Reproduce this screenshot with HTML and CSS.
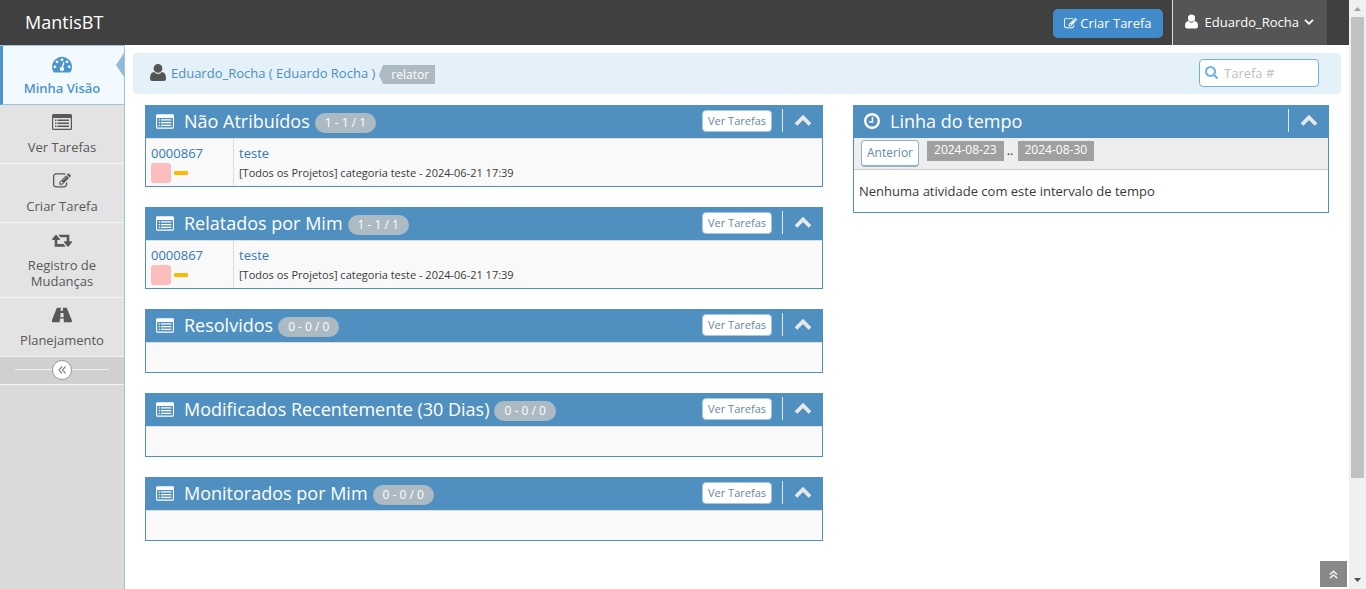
FILE: index.html
```html
<!DOCTYPE html>
<html lang="pt-BR">
<head>
<meta charset="utf-8">
<title>Minha Visão - MantisBT</title>
<link rel="stylesheet" href="styles.css">
</head>
<body>
<svg class="sprite" aria-hidden="true">
  <symbol id="i-gauge" viewBox="0 0 1792 1792"><path d="M384 1152q0-53-37.500-90.500t-90.500-37.500-90.500 37.500-37.500 90.500 37.500 90.500 90.500 37.500 90.500-37.500 37.500-90.500zm192-448q0-53-37.500-90.500t-90.500-37.500-90.500 37.500-37.500 90.500 37.500 90.500 90.500 37.500 90.500-37.500 37.500-90.500zm428 481l101-382q6-26-7.500-48.500t-38.500-29.500-48 6.500-30 39.500l-101 382q-60 5-107 43.500t-63 98.500q-20 77 20 146t117 89 146-20 89-117q16-60-6-117t-72-91zm660-33q0-53-37.500-90.500t-90.500-37.500-90.500 37.500-37.500 90.500 37.500 90.500 90.500 37.500 90.500-37.500 37.500-90.500zm-640-640q0-53-37.500-90.500t-90.500-37.500-90.500 37.500-37.500 90.500 37.500 90.500 90.500 37.500 90.500-37.500 37.500-90.500zm448 192q0-53-37.500-90.500t-90.500-37.500-90.500 37.500-37.500 90.500 37.500 90.500 90.500 37.500 90.500-37.500 37.500-90.500zm320 448q0 261-141 483-19 29-54 29h-1402q-35 0-54-29-141-221-141-483 0-182 71-348t191-286 286-191 348-71 348 71 286 191 191 286 71 348z"/></symbol>
  <symbol id="i-list" viewBox="0 0 20 16"><path fill-rule="evenodd" d="M1.500 0h17A1.500 1.500 0 0 1 20 1.500v13a1.500 1.500 0 0 1-1.500 1.500h-17A1.500 1.500 0 0 1 0 14.500v-13A1.500 1.500 0 0 1 1.500 0zM1.200 4v10.800h17.600V4zM3 5.500h1.500v1.500H3zm2.500 0h11.500v1.500H5.500zM3 8.500h1.500v1.500H3zm2.500 0h11.500v1.500H5.500zM3 11.500h1.500v1.500H3zm2.500 0h11.500v1.500H5.500z"/></symbol>
  <symbol id="i-edit" viewBox="0 0 1792 1792"><path d="M888 1184l116-116-152-152-116 116v56h96v96h56zm440-720q-16-16-33 1l-350 350q-17 17-1 33t33-1l350-350q17-17 1-33zm80 594v190q0 119-84.500 203.500t-203.500 84.500h-832q-119 0-203.500-84.500t-84.500-203.500v-832q0-119 84.500-203.500t203.500-84.500h832q63 0 117 25 15 7 18 23 3 17-9 29l-49 49q-14 14-32 8-23-6-45-6h-832q-66 0-113 47t-47 113v832q0 66 47 113t113 47h832q66 0 113-47t47-113v-126q0-13 9-22l64-64q15-15 35-7t20 29zm-96-738l288 288-672 672h-288v-288zm444 132l-92 92-288-288 92-92q28-28 68-28t68 28l152 152q28 28 28 68t-28 68z"/></symbol>
  <symbol id="i-retweet" viewBox="0 128 1920 1536"><path d="M1280 1504q0 13-9.500 22.500t-22.500 9.500h-960q-8 0-13.500-2t-9-7-5.500-8-3-11.500-1-11.500v-600h-192q-26 0-45-19t-19-45q0-24 15-41l320-384q19-22 49-22t49 22l320 384q15 17 15 41 0 26-19 45t-45 19h-192v384h576q16 0 25 11l160 192q7 10 7 21zm640-416q0 24-15 41l-320 384q-20 23-49 23t-49-23l-320-384q-15-17-15-41 0-26 19-45t45-19h192v-384h-576q-16 0-25-12l-160-192q-7-9-7-20 0-13 9.500-22.500t22.500-9.500h960q8 0 13.500 2t9 7 5.500 8 3 11.500 1 11.500v600h192q26 0 45 19t19 45z"/></symbol>
  <symbol id="i-road" viewBox="64 192 1792 1408"><path d="M1111 1068v-4l-24-320q-1-13-11-22.500t-23-9.500h-186q-13 0-23 9.500t-11 22.500l-24 320v4q-1 12 8 20t21 8h244q12 0 21-8t8-20zm742 395q0 73-46 73h-704q13 0 22-9.500t8-22.500l-20-256q-1-13-11-22.500t-23-9.500h-272q-13 0-23 9.500t-11 22.500l-20 256q-1 13 8 22.500t22 9.500h-704q-46 0-46-73 0-54 26-116l417-1044q8-19 26-33t38-14h339q-13 0-23 9.500t-11 22.500l-15 192q-1 14 8 23t22 9h166q13 0 22-9t8-23l-15-192q-1-13-11-22.500t-23-9.500h339q20 0 38 14t26 33l417 1044q26 62 26 116z"/></symbol>
  <symbol id="i-user" viewBox="0 0 16 17"><path d="M8 0a4.400 4.400 0 0 1 4.400 4.400A4.400 4.400 0 0 1 8 8.800a4.400 4.400 0 0 1-4.400-4.400A4.400 4.400 0 0 1 8 0zM4.200 8Q5.800 9.900 8 9.900T11.800 8Q16 8.300 16 14.400q0 2.600-2 2.600H2q-2 0-2-2.600Q0 8.300 4.200 8z"/></symbol>
  <symbol id="i-search" viewBox="64 128 1664 1664"><path d="M1216 832q0-185-131.500-316.500t-316.500-131.500-316.500 131.500-131.500 316.500 131.500 316.500 316.500 131.500 316.500-131.500 131.500-316.500zm512 832q0 52-38 90t-90 38q-54 0-90-38l-343-342q-179 124-399 124-143 0-273.500-55.500t-225-150-150-225-55.500-273.500 55.500-273.500 150-225 225-150 273.500-55.500 273.500 55.500 225 150 150 225 55.500 273.500q0 220-124 399l343 343q37 37 37 90z"/></symbol>
  <symbol id="i-clock" viewBox="0 0 16 16"><path fill="none" stroke="currentColor" stroke-width="2.400" d="M8 1.200a6.800 6.800 0 1 1 0 13.600a6.800 6.800 0 0 1 0-13.600z"/><path fill="none" stroke="currentColor" stroke-width="1.500" d="M8.500 4v5H5"/></symbol>
  <symbol id="i-up" viewBox="0 0 18 14"><path fill="none" stroke="currentColor" stroke-width="3.800" d="M2 11.500l7-7 7 7"/></symbol>
  <symbol id="i-down" viewBox="0 0 10 8"><path fill="none" stroke="currentColor" stroke-width="1.800" d="M1 1.800l4 4 4-4"/></symbol>
  <symbol id="i-left2" viewBox="0 0 10 10"><path fill="none" stroke="currentColor" stroke-width="1.200" d="M5 1.500L2 5 5 8.500M8.500 1.500L5.500 5 8.500 8.500"/></symbol>
  <symbol id="i-up2" viewBox="0 0 10 10"><path fill="none" stroke="currentColor" stroke-width="1.700" d="M1 5l4-3.500L9 5M1 9l4-3.500L9 9"/></symbol>
</svg>

<div class="window">
  <div class="page">
    <header class="navbar">
      <a class="brand" href="#">MantisBT</a>
      <div class="navbar-right">
        <a class="btn-create" href="#"><svg class="icon"><use href="#i-edit"/></svg>Criar Tarefa</a>
        <a class="user-menu" href="#"><svg class="icon"><use href="#i-user"/></svg><span>Eduardo_Rocha</span><svg class="caret"><use href="#i-down"/></svg></a>
      </div>
    </header>
    <div class="main">
      <nav class="sidebar">
        <a class="item active" href="#"><svg class="icon"><use href="#i-gauge"/></svg>Minha Visão</a>
        <a class="item" href="#"><svg class="icon list"><use href="#i-list"/></svg>Ver Tarefas</a>
        <a class="item" href="#"><svg class="icon"><use href="#i-edit"/></svg>Criar Tarefa</a>
        <a class="item" href="#"><svg class="icon"><use href="#i-retweet"/></svg>Registro de Mudanças</a>
        <a class="item" href="#"><svg class="icon"><use href="#i-road"/></svg>Planejamento</a>
        <div class="collapse"><button type="button" aria-label="Recolher menu"><svg><use href="#i-left2"/></svg></button></div>
      </nav>
      <main class="content">
        <div class="breadcrumbs">
          <svg class="icon"><use href="#i-user"/></svg>
          <a href="#">Eduardo_Rocha ( Eduardo Rocha )</a>
          <span class="role">relator</span>
          <form class="search">
            <svg><use href="#i-search"/></svg>
            <input type="text" placeholder="Tarefa #" aria-label="Tarefa #">
          </form>
        </div>
        <div class="columns">
          <div class="column">
            <section class="card">
              <header class="card-head"><svg class="icon"><use href="#i-list"/></svg><h4>Não Atribuídos</h4><span class="badge">1 - 1 / 1</span><a class="btn-small" href="#">Ver Tarefas</a><button class="toggle" type="button" aria-label="Recolher"><svg><use href="#i-up"/></svg></button></header>
              <table class="issues"><tr><td class="id"><a href="#">0000867</a><div class="marks"><i class="status"></i><i class="priority"></i></div></td><td><a href="#">teste</a><div class="info">[Todos os Projetos] categoria teste - 2024-06-21 17:39</div></td></tr></table>
            </section>
            <section class="card">
              <header class="card-head"><svg class="icon"><use href="#i-list"/></svg><h4>Relatados por Mim</h4><span class="badge">1 - 1 / 1</span><a class="btn-small" href="#">Ver Tarefas</a><button class="toggle" type="button" aria-label="Recolher"><svg><use href="#i-up"/></svg></button></header>
              <table class="issues"><tr><td class="id"><a href="#">0000867</a><div class="marks"><i class="status"></i><i class="priority"></i></div></td><td><a href="#">teste</a><div class="info">[Todos os Projetos] categoria teste - 2024-06-21 17:39</div></td></tr></table>
            </section>
            <section class="card">
              <header class="card-head"><svg class="icon"><use href="#i-list"/></svg><h4>Resolvidos</h4><span class="badge">0 - 0 / 0</span><a class="btn-small" href="#">Ver Tarefas</a><button class="toggle" type="button" aria-label="Recolher"><svg><use href="#i-up"/></svg></button></header>
              <div class="empty"></div>
            </section>
            <section class="card">
              <header class="card-head"><svg class="icon"><use href="#i-list"/></svg><h4>Modificados Recentemente (30 Dias)</h4><span class="badge">0 - 0 / 0</span><a class="btn-small" href="#">Ver Tarefas</a><button class="toggle" type="button" aria-label="Recolher"><svg><use href="#i-up"/></svg></button></header>
              <div class="empty"></div>
            </section>
            <section class="card">
              <header class="card-head"><svg class="icon"><use href="#i-list"/></svg><h4>Monitorados por Mim</h4><span class="badge">0 - 0 / 0</span><a class="btn-small" href="#">Ver Tarefas</a><button class="toggle" type="button" aria-label="Recolher"><svg><use href="#i-up"/></svg></button></header>
              <div class="empty"></div>
            </section>
          </div>
          <div class="column">
            <section class="card timeline">
              <header class="card-head"><svg class="icon"><use href="#i-clock"/></svg><h4>Linha do tempo</h4><button class="toggle" type="button" aria-label="Recolher"><svg><use href="#i-up"/></svg></button></header>
              <div class="toolbar"><a class="btn-prev" href="#">Anterior</a><span class="date">2024-08-23</span><span class="dots">..</span><span class="date">2024-08-30</span></div>
              <p>Nenhuma atividade com este intervalo de tempo</p>
            </section>
          </div>
        </div>
      </main>
    </div>
  </div>
  <div class="scrollbar" aria-hidden="true">
    <svg viewBox="0 0 17 17"><path fill="#a3a3a3" d="M5 11l3.500-4L12 11z"/></svg>
    <div class="track"><div class="thumb"></div></div>
    <svg viewBox="0 0 17 17"><path fill="#505050" d="M5 6l3.500 4L12 6z"/></svg>
  </div>
</div>
<a class="to-top" href="#" aria-label="Voltar ao topo"><svg><use href="#i-up2"/></svg></a>
</body>
</html>
```
FILE: styles.css
```css
* { box-sizing: border-box; }
body { margin: 0; font: 13px/20px "Open Sans", sans-serif; color: #393939; background: #fff; }
a { color: inherit; text-decoration: none; }
button { font: inherit; cursor: pointer; }
svg { fill: currentColor; flex: none; display: block; }
.sprite { position: absolute; width: 0; height: 0; }

.window { display: flex; min-height: 100vh; }
.page { flex: 1; min-width: 0; display: flex; flex-direction: column; }

/* top bar */
.navbar { display: flex; justify-content: space-between; height: 45px; background: #404040; color: #fff; padding-right: 22px; }
.brand { font-size: 18px; line-height: 45px; padding-left: 25px; }
.navbar-right { display: flex; align-items: center; gap: 9px; }
.btn-create { display: flex; align-items: center; gap: 3px; height: 29px; margin-top: 1px; padding: 0 11px; border-radius: 5px; background: #428bca; }
.btn-create .icon { width: 13px; height: 13px; }
.user-menu { display: flex; align-items: center; height: 45px; padding: 0 13px 2px 12px; background: #555; border-left: 1px solid #ddd; }
.user-menu .icon { width: 13px; height: 15px; margin-right: 7px; }
.user-menu .caret { width: 10px; height: 8px; margin-left: 5px; }

/* side menu */
.main { flex: 1; display: flex; }
.sidebar { flex: none; width: 125px; background: #dadada; border-right: 1px solid #9fc5da; border-top: 1px solid #9fc5da; }
.item { display: flex; flex-direction: column; align-items: center; gap: 8px; padding: 8px 16px; border-bottom: 1px solid #f4f4f4; background: #e3e3e3; color: #585858; line-height: 16px; text-align: center; position: relative; }
.item .icon { width: 20px; height: 18px; }
.item .list { padding: 1px 0; }
.item.active { background: #f2f9ff; color: #4b93cb; font-weight: 600; border-left: 3px solid #4b93cb; border-bottom-color: #9fc5da; padding-left: 13px; }
.item.active .icon { height: 20px; margin-bottom: -2px; }
.item.active::after { content: ""; position: absolute; right: 0; top: 7px; border: 12px solid transparent; border-left-width: 0; border-right: 8px solid #90bbd8; }
.collapse { display: flex; align-items: center; height: 28px; padding: 0 15px 2px; border-bottom: 1px solid #f4f4f4; background: #d0d0d0; }
.collapse::before, .collapse::after { content: ""; flex: 1; height: 1px; background: #f0f0f0; }
.collapse button { width: 20px; height: 20px; padding: 0; border: 1px solid #999; border-radius: 50%; background: #fff; color: #888; display: grid; place-items: center; }
.collapse svg { width: 10px; height: 10px; }

/* content */
.content { flex: 1; min-width: 0; padding: 8px; }
.breadcrumbs { display: flex; align-items: center; min-height: 41px; padding: 0 22px 2px 17px; background: #e5f1f8; border-radius: 4px; color: #4c8fbd; }
.breadcrumbs .icon { width: 16px; height: 17px; margin-right: 5px; color: #555; }
.role { margin: 4px 0 0 8px; padding: 0 6px 0 8px; background: #abbac3; color: #fff; font-size: 12px; line-height: 19px; position: relative; }
.role::before { content: ""; position: absolute; left: -4px; top: 0; border-right: 4px solid #abbac3; border-top: 10px solid transparent; border-bottom: 9px solid transparent; }
.search { margin: 0 0 0 auto; display: flex; align-items: center; gap: 6px; width: 120px; height: 28px; padding: 0 5px; border: 1px solid #6fb3e0; border-radius: 4px; background: #fff; color: #6fb3e0; }
.search svg { width: 13px; height: 13px; }
.search input { flex: 1; min-width: 0; border: 0; padding: 0; background: none; font: inherit; color: #555; outline: 0; }
.search input::placeholder { color: #c0c0c0; opacity: 1; }

.columns { display: grid; grid-template-columns: minmax(0, 678fr) minmax(0, 476fr); gap: 30px; padding: 11px 12px; align-items: start; }
.column { display: flex; flex-direction: column; gap: 20px; }
.card { border: 1px solid #5090c1; border-top: 0; }
.card-head { display: flex; align-items: center; height: 33px; padding: 0 10px 1px; background: #5090c1; color: #fff; }
.card-head .icon { width: 18px; height: 15px; margin-right: 10px; }
.card-head h4 { margin: 0; font-size: 18px; font-weight: normal; line-height: 30px; padding-bottom: 1px; }
.timeline .card-head { padding-left: 9px; }
.timeline .card-head .icon { height: 16px; margin-right: 9px; }
.badge { margin: 3px 0 0 5px; padding: 0 10px; border-radius: 10px; background: #abbac3; font-size: 12px; line-height: 20px; }
.btn-small { margin-left: auto; padding: 0 5px; border: 1px solid #a8c8e0; border-radius: 4px; background: #fff; color: #6688a6; font-size: 11px; line-height: 20px; }
.toggle { margin: 0 0 2px 10px; height: 23px; padding: 0 0 0 11px; border: 0; border-left: 1px solid #dfeaf3; background: none; color: #e8e8e8; }
.timeline .toggle { margin-left: auto; }
.toggle svg { width: 18px; height: 14px; }
.issues { width: 100%; border-spacing: 0; background: #f9f9f9; border-top: 1px solid #ddd; }
.issues td { vertical-align: top; padding: 4px 5px 3px; height: 47px; }
.issues td.id { width: 88px; border-right: 1px solid #ddd; }
.issues a { display: block; line-height: 20px; color: #337ab7; }
.marks { display: flex; align-items: center; gap: 3px; }
.status { width: 20px; height: 20px; border-radius: 3px; background: #fcbdbd; }
.priority { width: 14px; height: 4px; border-radius: 1px; background: #ffb800; }
.info { font-size: 11px; line-height: 20px; }
.empty { height: 30px; background: #f9f9f9; border-top: 1px solid #ddd; }

.toolbar { display: flex; align-items: flex-start; height: 32px; padding: 2px 7px; background: #eee; border-bottom: 1px solid #ccc; }
.btn-prev { margin-right: 8px; padding: 0 5px; border: 1px solid #8fb2d0; border-bottom-width: 2px; border-radius: 4px; background: #fff; color: #6688a6; font-size: 12px; line-height: 24px; }
.date { margin-top: 1px; padding: 0 7px 2px; background: #a0a0a0; color: #fff; font-size: 12px; line-height: 18px; }
.dots { padding: 0 4px 0 3px; }
.timeline p { margin: 0; padding: 11px 5px; }

/* scroll bar */
.scrollbar { flex: none; width: 17px; height: 100vh; position: sticky; top: 0; display: flex; flex-direction: column; background: #f0f0f0; }
.scrollbar svg { width: 17px; height: 17px; }
.track { flex: 1; padding: 0 2px; }
.thumb { height: 83%; background: #c1c1c1; }
.to-top { position: fixed; right: 19px; bottom: 2px; width: 27px; height: 26px; display: grid; place-items: center; background: #888; color: #f0f0f0; }
.to-top svg { width: 9px; height: 9px; }
```
